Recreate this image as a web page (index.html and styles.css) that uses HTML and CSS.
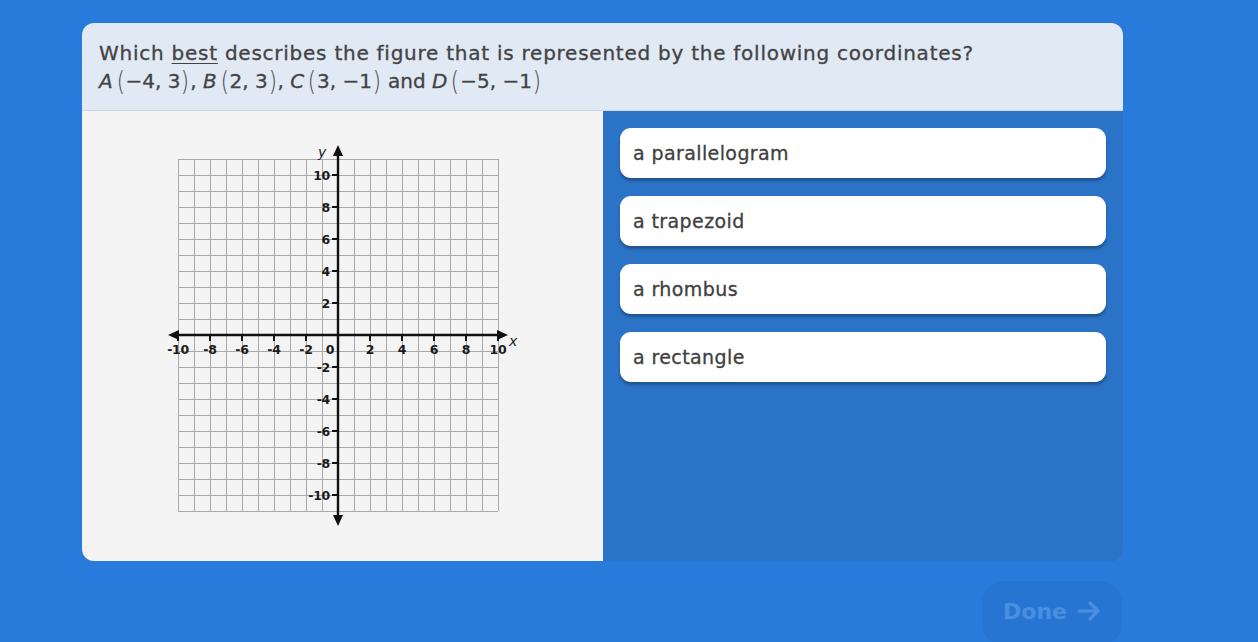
FILE: index.html
```html
<!DOCTYPE html>
<html>
<head>
<meta charset="utf-8">
<link rel="stylesheet" href="styles.css">
</head>
<body>
<div class="wrap">
  <div class="card">
    <div class="question">
      <div class="q-line">Which <span class="u">best</span> describes the figure that is represented by the following coordinates?</div>
      <div class="q-line math"><i>A</i><span class="p">(</span>−4, 3<span class="p">)</span>, <i>B</i><span class="p">(</span>2, 3<span class="p">)</span>, <i>C</i><span class="p">(</span>3, −1<span class="p">)</span> and <i>D</i><span class="p">(</span>−5, −1<span class="p">)</span></div>
    </div>
    <div class="body">
      <div class="figure">
        <svg class="graph" width="521" height="450" viewBox="0 0 521 450" xmlns="http://www.w3.org/2000/svg">
          <g id="grid" stroke="#a9a9a9" stroke-width="1"></g>
          <g stroke="#111" stroke-width="2.4">
            <line x1="256" y1="44" x2="256" y2="404"/>
            <line x1="94" y1="224" x2="418" y2="224"/>
          </g>
          <g fill="#111">
            <polygon points="256,34 251,45 261,45"/>
            <polygon points="256,415 251,404 261,404"/>
            <polygon points="86,224 97,219 97,229"/>
            <polygon points="426,224 415,219 415,229"/>
          </g>
          <g id="ticks" stroke="#111" stroke-width="2"></g>
          <g class="lbl" id="labels"></g>
          <text class="axis-name" x="236" y="46">y</text>
          <text class="axis-name" x="427" y="235">x</text>
        </svg>
      </div>
      <div class="answers">
        <div class="answer">a parallelogram</div>
        <div class="answer">a trapezoid</div>
        <div class="answer">a rhombus</div>
        <div class="answer">a rectangle</div>
      </div>
    </div>
  </div>
  <div class="footer">
    <div class="done">Done <svg class="arrow" width="24" height="20" viewBox="0 0 24 20"><path d="M2 10 H21 M13 2 L21 10 L13 18" fill="none" stroke="currentColor" stroke-width="3.2" stroke-linecap="round" stroke-linejoin="round"/></svg></div>
  </div>
</div>
<script>
(function(){
  var ns="http://www.w3.org/2000/svg";
  var grid=document.getElementById('grid');
  var ticks=document.getElementById('ticks');
  var labels=document.getElementById('labels');
  function line(g,x1,y1,x2,y2){var l=document.createElementNS(ns,'line');l.setAttribute('x1',x1);l.setAttribute('y1',y1);l.setAttribute('x2',x2);l.setAttribute('y2',y2);g.appendChild(l);}
  function text(x,y,t,anchor){var e=document.createElementNS(ns,'text');e.setAttribute('x',x);e.setAttribute('y',y);e.setAttribute('text-anchor',anchor);e.textContent=t;labels.appendChild(e);}
  for(var i=0;i<=20;i++){var x=96.5+16*i;line(grid,x,48,x,400);}
  for(var j=0;j<=22;j++){var y=48.5+16*j;line(grid,96,y,416,y);}
  for(var v=-10;v<=10;v+=2){
    if(v===0)continue;
    var px=256+16*v, py=224-16*v;
    line(ticks,px,224,px,230);
    line(ticks,250,py,256,py);
    text(px, 243, (v<0?'-':'')+Math.abs(v), 'middle');
    text(248, py+5, (v<0?'-':'')+Math.abs(v), 'end');
  }
  text(248,243,'0','middle');
})();
</script>
</body>
</html>
```
FILE: styles.css
```css
html, body {
  margin: 0;
  padding: 0;
}
body {
  background: #287bdb;
  width: 1258px;
  height: 642px;
  overflow: hidden;
  font-family: "DejaVu Sans", "Open Sans", sans-serif;
}
.wrap {
  padding: 23px 0 0 82px;
  width: 1041px;
}
.card {
  width: 1041px;
  height: 538px;
  border-radius: 12px;
  overflow: hidden;
  display: flex;
  flex-direction: column;
}
.question {
  background: #e0e9f4;
  height: 88px;
  border-bottom: 1px solid #cfd8e2;
  padding: 16px 17px 0;
  box-sizing: border-box;
  color: #434343;
  font-size: 20px;
  line-height: 28px;
  letter-spacing: 0.75px;
  -webkit-text-stroke: 0.3px #434343;
}
.u {
  text-decoration: underline;
  text-underline-offset: 3px;
  text-decoration-thickness: 1px;
}
.math {
  letter-spacing: 0;
}
.math i {
  font-style: italic;
  margin-right: 3px;
}
.math .p {
  display: inline-block;
  font-size: 20px;
  line-height: 20px;
  font-weight: 300;
  transform: scale(1.05, 1.35);
  -webkit-text-stroke: 0;
  margin: 0 1px;
}
.body {
  flex: 1;
  display: flex;
}
.figure {
  width: 521px;
  background: #f4f4f4;
}
.graph {
  display: block;
}
.lbl text {
  font-family: "DejaVu Sans", sans-serif;
  font-weight: bold;
  font-size: 12.5px;
  fill: #1a1a1a;
  letter-spacing: -0.3px;
}
.axis-name {
  font-family: "DejaVu Sans", sans-serif;
  font-style: italic;
  font-size: 14px;
  fill: #1a1a1a;
}
.answers {
  flex: 1;
  background: #2b73c6;
  padding: 17px 17px 0;
  display: flex;
  flex-direction: column;
  gap: 18px;
}
.answer {
  height: 50px;
  background: #fff;
  border-radius: 11px;
  box-shadow: 0 3px 3px rgba(0, 0, 0, 0.28);
  display: flex;
  align-items: center;
  padding-left: 13px;
  font-size: 19px;
  letter-spacing: 0.4px;
  color: #404040;
  -webkit-text-stroke: 0.3px #404040;
}
.footer {
  display: flex;
  justify-content: flex-end;
  margin-top: 20px;
  padding-right: 1px;
}
.done {
  width: 140px;
  height: 64px;
  border-radius: 22px;
  background: #2775d3;
  color: #4a8fdf;
  font-size: 22px;
  font-weight: 700;
  display: flex;
  align-items: center;
  justify-content: center;
  gap: 10px;
  padding-bottom: 4px;
  box-sizing: border-box;
}
.arrow {
  display: block;
}
```
